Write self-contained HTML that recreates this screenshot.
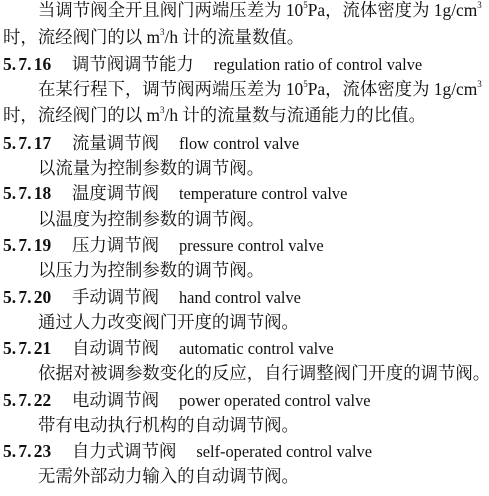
<!DOCTYPE html>
<html><head><meta charset="utf-8"><style>
body{margin:0;width:489px;height:496px;background:#fff;overflow:hidden;position:relative;
font-family:"Liberation Serif","Noto Serif CJK SC",serif;font-size:17.4px;color:#111;}
.l{position:absolute;white-space:nowrap;line-height:22px;}
.i{left:38px}.n{left:3px}
.n b{display:inline-block;width:69px;font-weight:bold;word-spacing:-2px}
.e{margin-left:20px;font-size:16.4px}
sup{font-size:9px;vertical-align:8px;line-height:0}
</style></head><body>
<div class="l i" style="top:-1px">当调节阀全开且阀门两端压差为 10<sup>5</sup>Pa，流体密度为 1g/cm<sup>3</sup></div>
<div class="l n" style="top:26px">时，流经阀门的以 m<sup>3</sup>/h 计的流量数值。</div>
<div class="l n" style="top:53px"><b>5. 7. 16</b>调节阀调节能力<span class="e">regulation ratio of control valve</span></div>
<div class="l i" style="top:78px">在某行程下，调节阀两端压差为 10<sup>5</sup>Pa，流体密度为 1g/cm<sup>3</sup></div>
<div class="l n" style="top:104px">时，流经阀门的以 m<sup>3</sup>/h 计的流量数与流通能力的比值。</div>
<div class="l n" style="top:132px"><b>5. 7. 17</b>流量调节阀<span class="e">flow control valve</span></div>
<div class="l i" style="top:157px">以流量为控制参数的调节阀。</div>
<div class="l n" style="top:182px"><b>5. 7. 18</b>温度调节阀<span class="e">temperature control valve</span></div>
<div class="l i" style="top:208px">以温度为控制参数的调节阀。</div>
<div class="l n" style="top:234px"><b>5. 7. 19</b>压力调节阀<span class="e">pressure control valve</span></div>
<div class="l i" style="top:259px">以压力为控制参数的调节阀。</div>
<div class="l n" style="top:286px"><b>5. 7. 20</b>手动调节阀<span class="e">hand control valve</span></div>
<div class="l i" style="top:311px">通过人力改变阀门开度的调节阀。</div>
<div class="l n" style="top:337px"><b>5. 7. 21</b>自动调节阀<span class="e">automatic control valve</span></div>
<div class="l i" style="top:362px">依据对被调参数变化的反应，自行调整阀门开度的调节阀。</div>
<div class="l n" style="top:389px"><b>5. 7. 22</b>电动调节阀<span class="e">power operated control valve</span></div>
<div class="l i" style="top:414px">带有电动执行机构的自动调节阀。</div>
<div class="l n" style="top:440px"><b>5. 7. 23</b>自力式调节阀<span class="e">self-operated control valve</span></div>
<div class="l i" style="top:465px">无需外部动力输入的自动调节阀。</div>
</body></html>
